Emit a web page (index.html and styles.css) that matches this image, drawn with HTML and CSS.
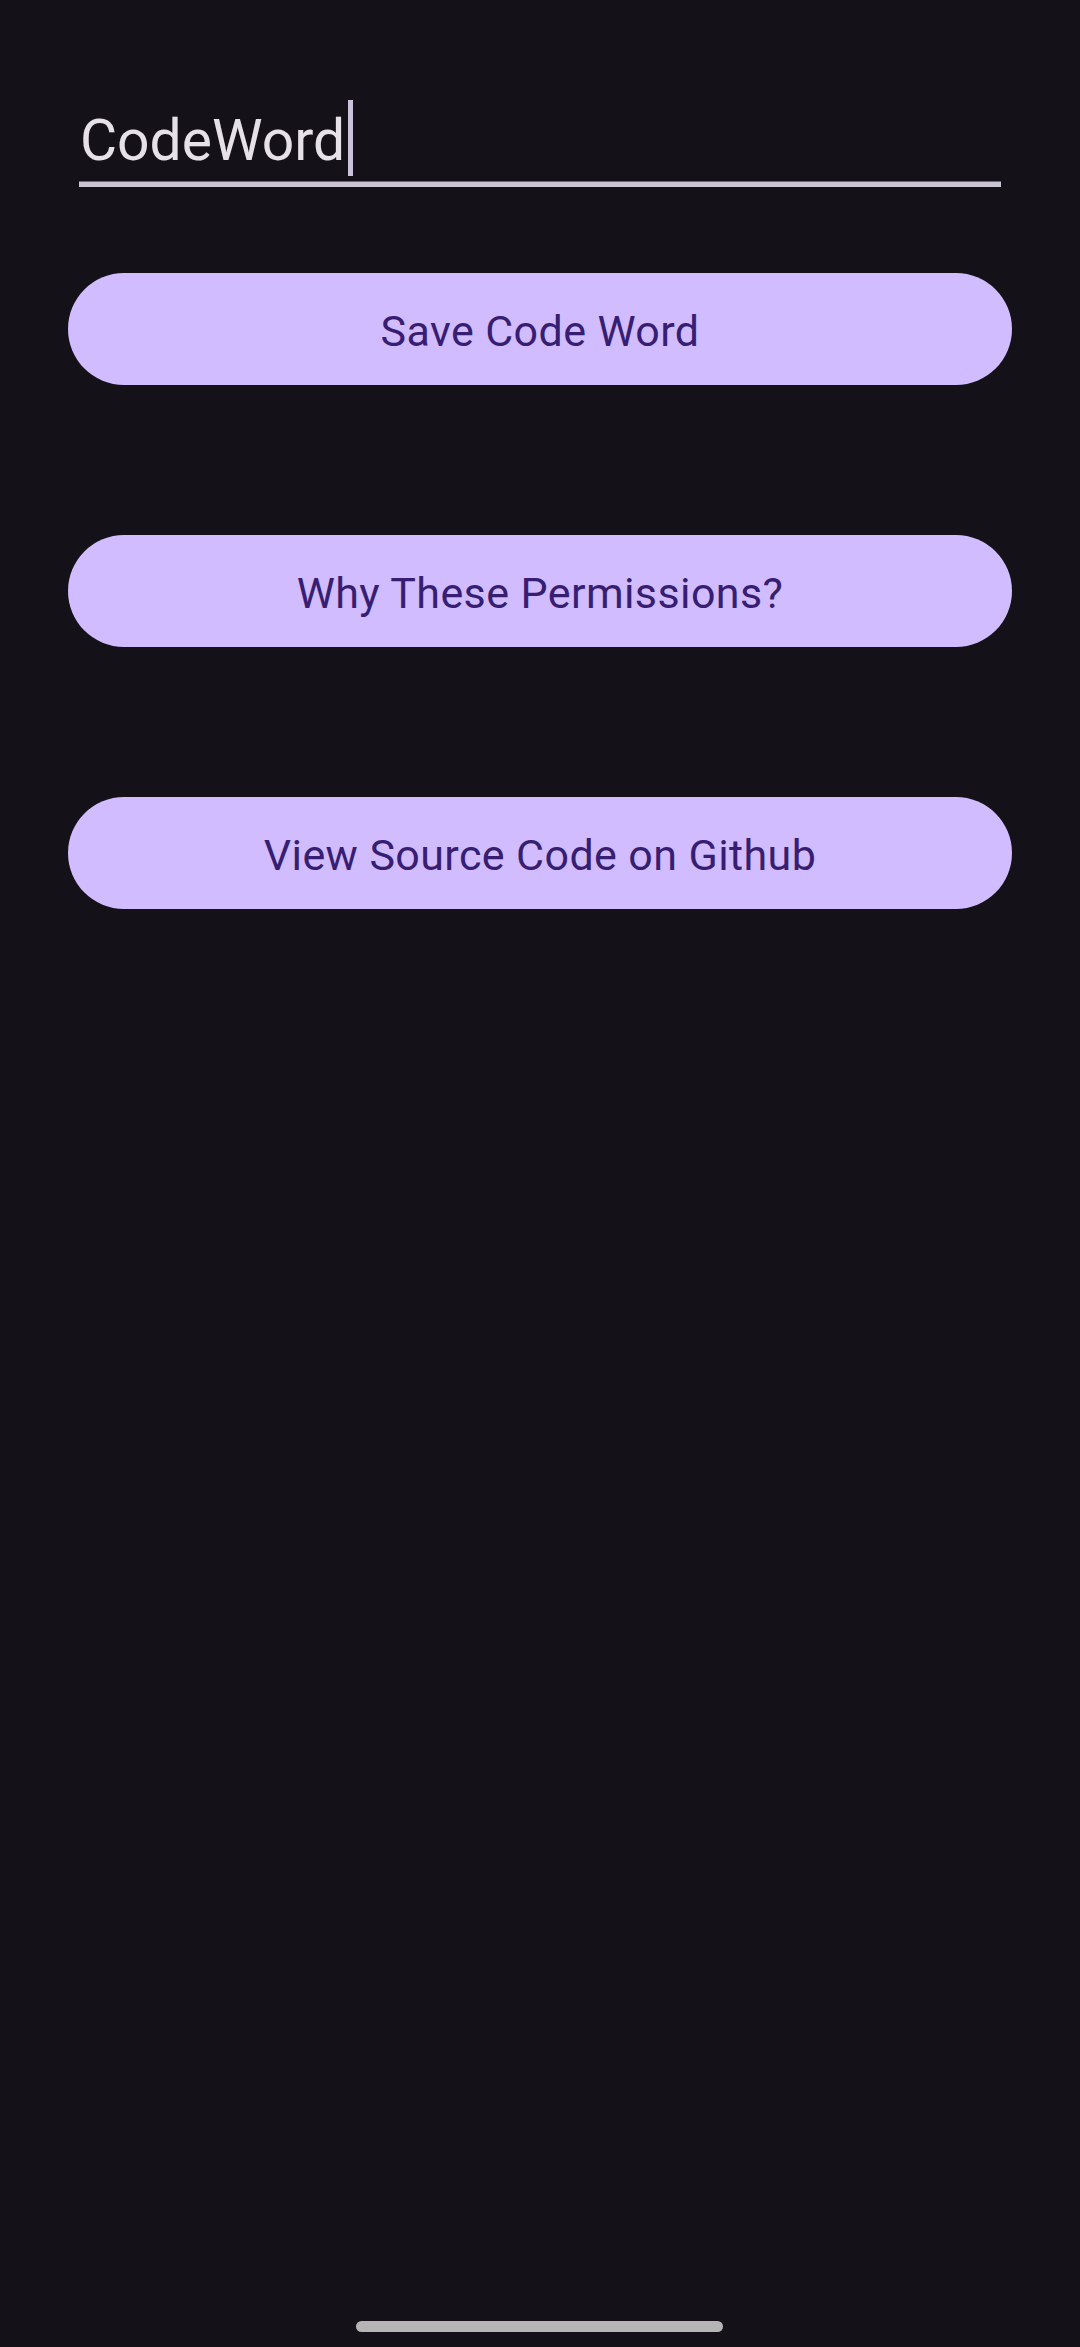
FILE: index.html
```html
<!DOCTYPE html>
<html lang="en">
<head>
<meta charset="utf-8">
<title>CodeWord</title>
<link rel="stylesheet" href="styles.css">
</head>
<body>
<main class="screen">
  <div class="field">
    <div class="field-row">
      <span class="field-text">CodeWord</span>
      <span class="caret"></span>
    </div>
    <div class="field-line"></div>
  </div>
  <div class="buttons">
    <button class="btn">Save Code Word</button>
    <button class="btn">Why These Permissions?</button>
    <button class="btn">View Source Code on Github</button>
  </div>
</main>
<div class="home-bar"></div>
</body>
</html>
```

FILE: styles.css
```css
html, body {
  margin: 0;
  padding: 0;
  background: #141218;
}
body {
  width: 1080px;
  height: 2347px;
  position: relative;
  font-family: Roboto, "Noto Sans", sans-serif;
  overflow: hidden;
}
.screen {
  padding: 103px 68px 0 68px;
  display: flex;
  flex-direction: column;
}
.field {
  margin: 0 11px;
  display: flex;
  flex-direction: column;
}
.field-row {
  display: flex;
  align-items: flex-start;
  height: 76px;
}
.field-text {
  font-size: 57px;
  line-height: 76px;
  color: #E6E0E9;
  padding-left: 1px;
}
.caret {
  width: 5px;
  height: 76px;
  margin-top: -3px;
  margin-left: 3px;
  background: #CCC2DC;
}
.field-line {
  margin-top: 2px;
  height: 5px;
  border-top: 1px solid #6a6372;
  background: #CAC4D0;
}
.buttons {
  margin-top: 86px;
  display: flex;
  flex-direction: column;
  gap: 150px;
}
.btn {
  height: 112px;
  border: none;
  border-radius: 56px;
  background: #D0BCFF;
  color: #381E72;
  font-family: Roboto, "Noto Sans", sans-serif;
  font-size: 43px;
  letter-spacing: 0.4px;
  padding: 4px 0 0 0;
  width: 100%;
}
.home-bar {
  position: absolute;
  left: 356px;
  top: 2321px;
  width: 367px;
  height: 11px;
  border-radius: 6px;
  background: #B5B5B5;
}
```
